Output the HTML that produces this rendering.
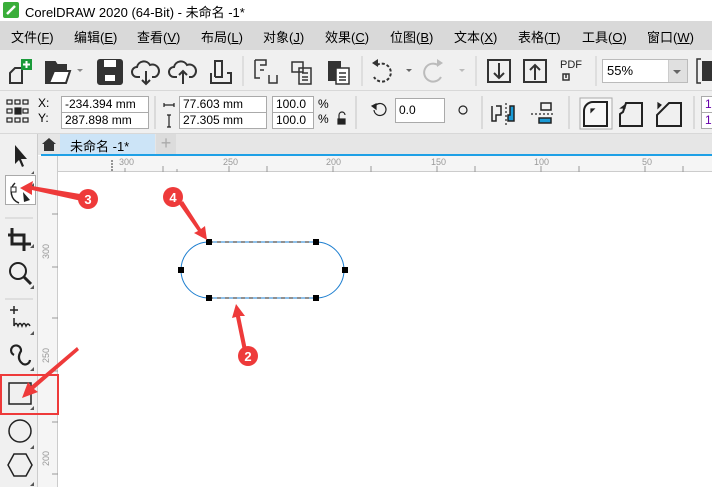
<!DOCTYPE html>
<html><head><meta charset="utf-8"><style>
*{margin:0;padding:0;box-sizing:border-box}
body{width:712px;height:487px;overflow:hidden;background:#fff;font-family:"Liberation Sans","Noto Sans CJK SC",sans-serif;position:relative}
.a{position:absolute}
.menu span{position:absolute;top:6px;font-size:13px;color:#000}
.inp{position:absolute;background:#fff;border:1px solid #aaa;font-size:12px;padding-left:3px;line-height:15px;height:17px}
</style></head><body>
<!-- title -->
<div class="a" style="left:0;top:0;width:712px;height:21px;background:#fff"></div>
<svg class="a" style="left:3px;top:2px" width="18" height="18"><rect x="0" y="0" width="16" height="16" rx="2" fill="#3aae3a"/><path d="M4 12 L12 4" stroke="#fff" stroke-width="2.5"/></svg>
<div class="a" style="left:25px;top:2px;font-size:13px">CorelDRAW 2020 (64-Bit) - 未命名 -1*</div>
<!-- menu -->
<div class="a menu" style="left:0;top:21px;width:712px;height:29px;background:#d9d9d9">
<span style="left:11px">文件(<u>F</u>)</span><span style="left:74px">编辑(<u>E</u>)</span><span style="left:137px">查看(<u>V</u>)</span><span style="left:201px">布局(<u>L</u>)</span><span style="left:263px">对象(<u>J</u>)</span><span style="left:325px">效果(<u>C</u>)</span><span style="left:390px">位图(<u>B</u>)</span><span style="left:454px">文本(<u>X</u>)</span><span style="left:518px">表格(<u>T</u>)</span><span style="left:582px">工具(<u>O</u>)</span><span style="left:647px">窗口(<u>W</u>)</span>
</div>
<!-- toolbar -->
<div class="a" style="left:0;top:50px;width:712px;height:41px;background:#f0f0f0;border-bottom:1px solid #d8d8d8"></div>
<svg class="a" style="left:0;top:50px" width="712" height="41" fill="none" stroke="#333" stroke-width="2">
<path d="M10 23 L15 18 H22 V33 H10 Z"/><rect x="21" y="9" width="11" height="11" fill="#1a9a3a" stroke="none"/><path d="M26.5 11 V18 M23 14.5 H30" stroke="#fff"/>
<path d="M46 33 V12 H55 L57 15 H66 V19 H54 L49 33 Z" fill="#333"/><path d="M49 33 L54 21 H70 L66 33 Z" fill="#fff"/>
<path d="M77 19 l3 3 l3 -3" fill="#888" stroke="none"/>
<rect x="98" y="10" width="24" height="24" rx="2" fill="#333"/><rect x="104" y="10" width="12" height="7" fill="#fff" stroke="none"/><rect x="105" y="25" width="10" height="6" fill="#fff" stroke="none"/>
<path d="M140 27 H137 a5 5 0 0 1 0-10 a7 7 0 0 1 13-2 a5 5 0 0 1 5 12 H152 M146 21 V34 M142 30 l4 4 l4 -4"/>
<path d="M177 27 H174 a5 5 0 0 1 0-10 a7 7 0 0 1 13-2 a5 5 0 0 1 5 12 H189 M183 34 V21 M179 25 l4 -4 l4 4"/>
<path d="M211 23 V33 H231 V23 H227 M215 27 V11 H222 V27 H215"/>
<line x1="243" y1="6" x2="243" y2="36" stroke="#ccc" stroke-width="1"/>
<path d="M255 10 H266 V15 H260 M255 10 V28 H260 M260 20 H264 M269 25 v8 h8 v-8" stroke-width="1.5"/>
<path d="M292 12 H303 V22 H292 Z M299 18 H311 V34 H299 Z M302 23 H308 M302 27 H308 M302 30 H308" stroke-width="1.5"/>
<path d="M329 12 H340 V30 H329 Z" fill="#333"/><path d="M336 18 H349 V34 H336 Z M339 23 H346 M339 27 H346 M339 30 H346" stroke-width="1.5" fill="#fff"/>
<line x1="362" y1="6" x2="362" y2="36" stroke="#ccc" stroke-width="1"/>
<path d="M377 15 a9 9 0 1 1 -3 12" stroke-dasharray="3 2"/><path d="M372 13 l6 -4 v8 z" fill="#333" stroke="none"/>
<path d="M406 19 l3 3 l3 -3" fill="#666" stroke="none"/>
<path d="M438 15 a9 9 0 1 0 3 12" stroke="#bbb"/><path d="M443 13 l-6 -4 v8 z" fill="#bbb" stroke="none"/>
<path d="M459 19 l3 3 l3 -3" fill="#bbb" stroke="none"/>
<line x1="476" y1="6" x2="476" y2="36" stroke="#ccc" stroke-width="1"/>
<rect x="488" y="10" width="22" height="22"/><path d="M499 13 V28 M494 23 l5 5 l5 -5"/>
<rect x="524" y="10" width="22" height="22"/><path d="M535 30 V15 M530 20 l5 -5 l5 5"/>
<path d="M563 30 V24 H569 V30 Z M566 24 V28" stroke-width="1.5"/>
<line x1="596" y1="6" x2="596" y2="36" stroke="#ccc" stroke-width="1"/>
<path d="M701 9 H697 V33 H701" stroke-width="1.5"/><rect x="702" y="11" width="10" height="20" fill="#333" stroke="none"/>
</svg>
<div class="a" style="left:560px;top:61px;font-size:11px;color:#222;line-height:9px">PDF</div>
<div class="a" style="left:602px;top:59px;width:86px;height:24px;background:#fff;border:1px solid #bbb;font-size:13px;padding:3px 0 0 4px">55%</div>
<div class="a" style="left:668px;top:60px;width:19px;height:22px;background:#e0e0e0;border-left:1px solid #ccc"></div>
<div class="a" style="left:673px;top:70px;border:4px solid transparent;border-top-color:#666"></div>
<!-- property bar -->
<div class="a" style="left:0;top:91px;width:712px;height:43px;background:#f0f0f0;border-bottom:1px solid #d8d8d8"></div>
<svg class="a" style="left:0;top:91px" width="712" height="43" fill="none" stroke="#222" stroke-width="1.2">
<g><rect x="7" y="9" width="5" height="4"/><rect x="15" y="9" width="5" height="4"/><rect x="23" y="9" width="5" height="4"/><rect x="7" y="18" width="5" height="4"/><rect x="15" y="17" width="6" height="6" fill="#222"/><rect x="23" y="18" width="5" height="4"/><rect x="7" y="27" width="5" height="4"/><rect x="15" y="27" width="5" height="4"/><rect x="23" y="27" width="5" height="4"/></g>
<line x1="155" y1="5" x2="155" y2="38" stroke="#ccc"/>
<path d="M164 14 H174 M164 12 v4 M174 12 v4 M167 14 h1 M170 14 h1"/>
<path d="M169 24 V36 M167 24 H171 M167 36 H171"/>
<path d="M339 29 V24 a3 3 0 0 1 6 0" /><rect x="338" y="28" width="7" height="5" fill="#222"/>
<line x1="356" y1="5" x2="356" y2="38" stroke="#ccc"/>
<path d="M376 14 a6 6 0 1 1 -2 5"/><path d="M372 15 l4 -2 l0 5 z" fill="#222"/>
<circle cx="463" cy="19" r="4"/>
<line x1="482" y1="5" x2="482" y2="38" stroke="#ccc"/>
<path d="M496 15 H501 V24 H496 V30 H492 V15" stroke-width="1.5"/><line x1="506" y1="12" x2="506" y2="35" stroke-dasharray="2 2"/><path d="M510 15 H514 V30 H508 V24 H510 Z" fill="#1a9ad6" stroke-width="1.5"/>
<path d="M541 12 H551 V19 H541 Z" stroke-width="1.5"/><line x1="531" y1="23" x2="553" y2="23" stroke-dasharray="2 2"/><path d="M539 27 H551 V32 H539 Z" fill="#1a9ad6" stroke-width="1.5"/>
<line x1="569" y1="5" x2="569" y2="38" stroke="#ccc"/>
<rect x="580" y="7" width="32" height="31" fill="#f8f8f8" stroke="#aaa" stroke-width="1"/>
<path d="M584 35 V20 a9 9 0 0 1 9 -9 H607 V35 Z" stroke-width="2"/><path d="M591 18 l3 0 l-3 3z" fill="#222"/>
<path d="M620 35 V23 l3 -2 l3 -9 H642 V35 Z" stroke-width="2"/><path d="M621 17 l4 -3 v3z" fill="#222"/>
<path d="M657 35 V24 L669 12 H681 V35 Z" stroke-width="2"/><path d="M658 12 l3 2 l-3 3z" fill="#222"/>
<line x1="694" y1="5" x2="694" y2="38" stroke="#ccc"/>
</svg>
<div class="a" style="left:38px;top:96px;font-size:12px;line-height:15px">X:<br>Y:</div>
<div class="inp" style="left:61px;top:96px;width:88px">-234.394 mm</div>
<div class="inp" style="left:61px;top:112px;width:88px">287.898 mm</div>
<div class="inp" style="left:179px;top:96px;width:88px">77.603 mm</div>
<div class="inp" style="left:179px;top:112px;width:88px">27.305 mm</div>
<div class="inp" style="left:272px;top:96px;width:42px">100.0</div>
<div class="inp" style="left:272px;top:112px;width:42px">100.0</div>
<div class="a" style="left:318px;top:97px;font-size:12px;line-height:15px">%<br>%</div>
<div class="inp" style="left:395px;top:98px;width:50px;height:25px;line-height:22px">0.0</div>
<div class="inp" style="left:701px;top:96px;width:14px;color:#60a">1.</div>
<div class="inp" style="left:701px;top:112px;width:14px;color:#60a">1.</div>
<!-- tab row -->
<div class="a" style="left:38px;top:134px;width:674px;height:21px;background:#e6e6e6"></div>
<svg class="a" style="left:40px;top:136px" width="18" height="16"><path d="M9 2 L2 8 H4 V15 H14 V8 H16 Z" fill="#333"/></svg>
<div class="a" style="left:60px;top:134px;width:95px;height:20px;background:#cce4f7;font-size:13px;padding:2px 0 0 10px">未命名 -1*</div>
<div class="a" style="left:156px;top:134px;width:20px;height:20px;background:#dcdcdc;color:#aaa;font-size:18px;text-align:center;line-height:19px">+</div>
<div class="a" style="left:41px;top:154px;width:671px;height:2px;background:#1ea0e6"></div>
<!-- rulers -->
<div class="a" style="left:38px;top:156px;width:674px;height:16px;background:#f5f5f5;border-bottom:1px solid #ccc"></div>
<div class="a" style="left:38px;top:156px;width:20px;height:331px;background:#f5f5f5;border-right:1px solid #ccc"></div>
<svg class="a" style="left:38px;top:156px" width="674" height="331" font-family="Liberation Sans" font-size="9" fill="#999">
<g stroke="#999"><line x1="87" y1="12" x2="87" y2="16"/><line x1="125" y1="10" x2="125" y2="16"/><line x1="139" y1="13" x2="139" y2="16"/><line x1="191" y1="10" x2="191" y2="16"/><line x1="229" y1="10" x2="229" y2="16"/><line x1="295" y1="10" x2="295" y2="16"/><line x1="333" y1="10" x2="333" y2="16"/><line x1="399" y1="10" x2="399" y2="16"/><line x1="437" y1="10" x2="437" y2="16"/><line x1="503" y1="10" x2="503" y2="16"/><line x1="541" y1="10" x2="541" y2="16"/><line x1="607" y1="10" x2="607" y2="16"/><line x1="645" y1="10" x2="645" y2="16"/>
<line x1="14" y1="58" x2="20" y2="58"/><line x1="14" y1="111" x2="20" y2="111"/><line x1="14" y1="162" x2="20" y2="162"/><line x1="14" y1="215" x2="20" y2="215"/><line x1="14" y1="266" x2="20" y2="266"/><line x1="14" y1="318" x2="20" y2="318"/></g>
<line x1="74" y1="4" x2="74" y2="16" stroke="#333" stroke-dasharray="2 1"/>
<text x="81" y="9">300</text><text x="185" y="9">250</text><text x="288" y="9">200</text><text x="393" y="9">150</text><text x="496" y="9">100</text><text x="604" y="9">50</text>
<text transform="translate(11,103) rotate(-90)">300</text><text transform="translate(11,207) rotate(-90)">250</text><text transform="translate(11,310) rotate(-90)">200</text>
</svg>
<!-- left toolbox -->
<div class="a" style="left:0;top:134px;width:38px;height:353px;background:#f0f0f0;border-right:1px solid #ccc"></div>
<div class="a" style="left:5px;top:175px;width:31px;height:30px;background:#fff;border:1px solid #aaa"></div>
<svg class="a" style="left:0;top:134px" width="38" height="353" fill="none" stroke="#222" stroke-width="2">
<path d="M15 11 V30 L19 26 L22 33 L24 32 L21 25 H27 Z" fill="#222" stroke="none"/>
<path d="M15 49 a12 12 0 0 0 4 20" stroke-width="1.5"/><rect x="11" y="53" width="5" height="5" fill="#fff" stroke-width="1"/><path d="M23 58 l7 8 l-6 2 z" fill="#222" stroke="none"/>
<line x1="5" y1="84" x2="33" y2="84" stroke="#ccc" stroke-width="1"/>
<path d="M12 94 V110 H31 M8 101 H24 V117" stroke-width="3"/>
<circle cx="18" cy="137" r="8"/><path d="M24 143 l7 7" stroke-width="3"/>
<line x1="5" y1="165" x2="33" y2="165" stroke="#ccc" stroke-width="1"/>
<path d="M14 172 v8 M10 176 h8 M14 184 v8 q2 -5 4 0 q2 -5 4 0 q2 -5 4 0 q2-4 4 0" stroke-width="1.5"/>
<path d="M14 221 a5 5 0 1 1 7 -4 q-5 8 2 13 a5 5 0 0 0 7 -4" stroke-width="2.2"/>
<rect x="9" y="249" width="22" height="21" stroke-width="1.5"/>
<circle cx="20" cy="297" r="11" stroke-width="1.5"/>
<path d="M14 320 H26 L32 331 L26 342 H14 L8 331 Z" stroke-width="1.5"/>
<g fill="#555" stroke="none"><path d="M34 49 l-4 4 h4z M34 110 l-4 4h4z M34 151 l-4 4h4z M34 197 l-4 4h4z M34 233 l-4 4h4z M34 272 l-4 4h4z M34 311 l-4 4h4z M34 348 l-4 4h4z M34 37 l-3 3h3z"/></g>
</svg>
<!-- canvas drawing -->
<svg class="a" style="left:0;top:0" width="712" height="487">
<path d="M209 242 H316 A28 28 0 0 1 316 298 H209 A28 28 0 0 1 209 242 Z" fill="none" stroke="#1e7fd0" stroke-width="1"/>
<path d="M209 242 H316 M209 298 H316" stroke="#222" stroke-dasharray="4 4" stroke-width="1"/>
<g fill="#000"><rect x="206" y="239" width="6" height="6"/><rect x="313" y="239" width="6" height="6"/><rect x="178" y="267" width="6" height="6"/><rect x="342" y="267" width="6" height="6"/><rect x="206" y="295" width="6" height="6"/><rect x="313" y="295" width="6" height="6"/></g>
<rect x="1" y="375" width="57" height="39" fill="none" stroke="#ee3a3a" stroke-width="2"/>
<g fill="#ee3a3a">
<path d="M86 195 L32 186 L33 181 L20 188 L32 195 L32 190 L86 202 Z"/>
<path d="M179 204 L198 231 L194 233 L207 240 L205 226 L201 229 L183 201 Z"/>
<path d="M247 350 L240 316 L245 316 L236 304 L232 318 L236 317 L243 351 Z"/>
<path d="M77 347 L31 386 L28 382 L22 398 L38 392 L34 389 L79 350 Z"/>
<circle cx="88" cy="199" r="10"/><circle cx="173" cy="197" r="10"/><circle cx="248" cy="356" r="10"/>
</g>
<g fill="#fff" font-family="Liberation Sans" font-size="13" font-weight="bold" text-anchor="middle"><text x="88" y="204">3</text><text x="173" y="202">4</text><text x="248" y="361">2</text></g>
</svg>
</body></html>
